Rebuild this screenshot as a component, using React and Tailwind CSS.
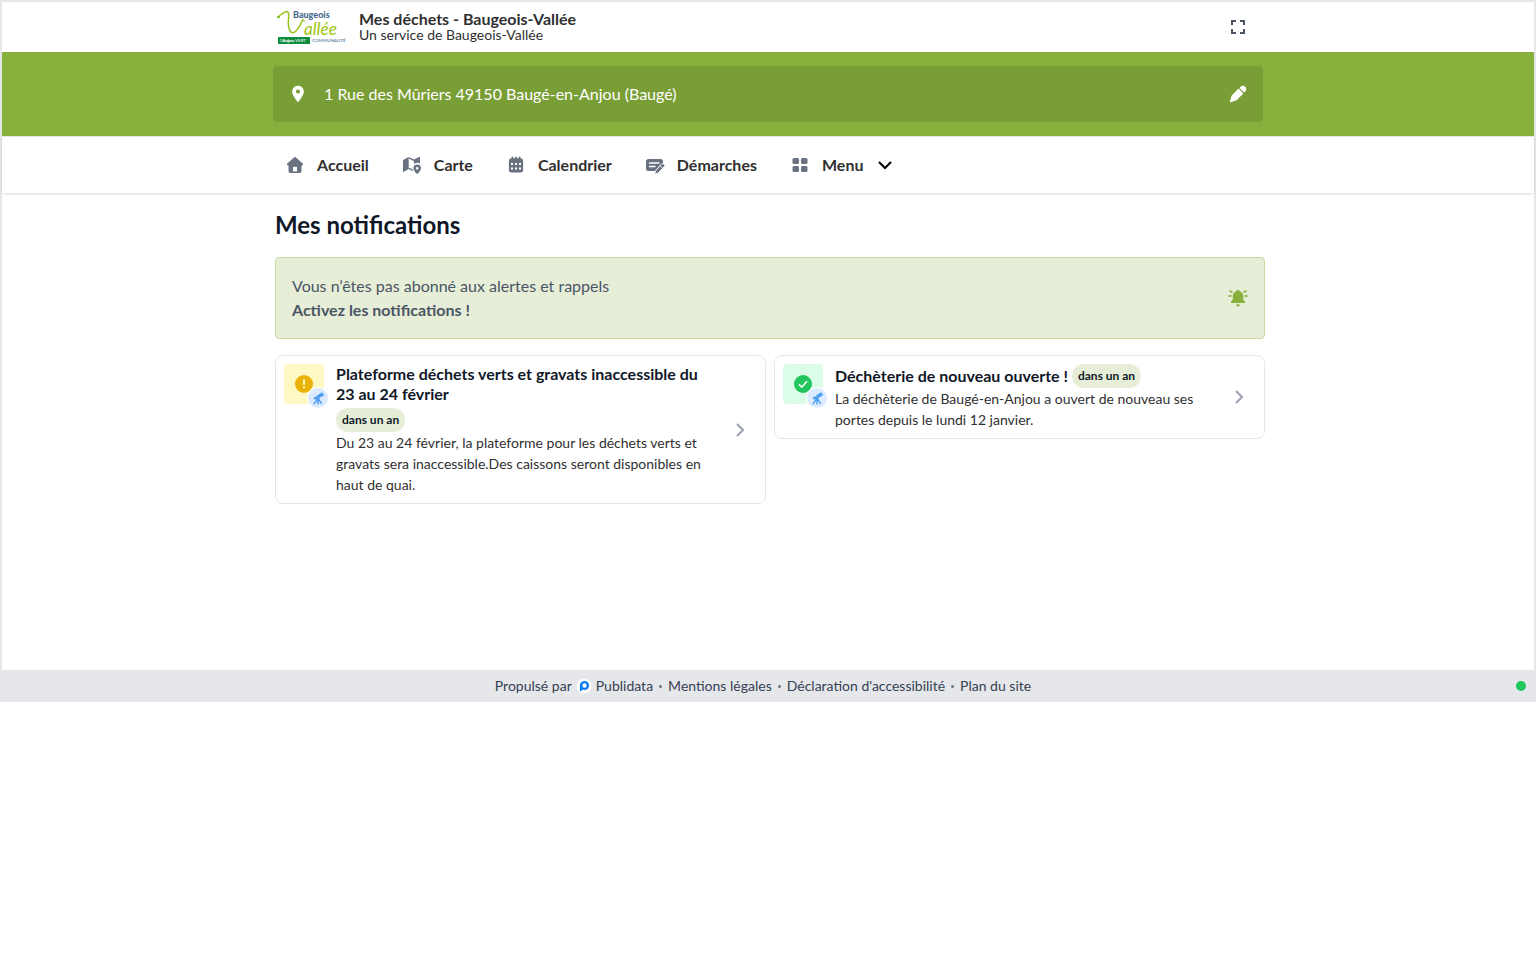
import React from 'react';
import { MdLocationOn, MdFullscreen } from 'react-icons/md';

const LogoIcon = () => (
  <svg viewBox="0 0 70 36" className="w-[70px] h-9 shrink-0" role="img" aria-label="Baugeois Vallée">
    <text x="16" y="9" fontSize="9" fontWeight="900" fontFamily="Lato, sans-serif" fill="#456a8c">Baugeois</text>
    <path
      d="M1 8C5 5 9 1 11 3c2 3-1 9 1 16 1 5 4 6 7 3 4-4 5-7 6-10 .5-2 2-1 2 0"
      fill="none"
      stroke="#9cc41f"
      strokeWidth="1.5"
      strokeLinecap="round"
    />
    <circle cx="1.5" cy="8" r="1.3" fill="#7bb51d" />
    <text x="27" y="26" fontSize="17" fontWeight="500" fontStyle="italic" fontFamily="Lato, sans-serif" fill="#a3c720">allée</text>
    <rect x="1" y="28" width="32" height="7" rx="0.5" fill="#0d8b3e" />
    <text x="3" y="33" fontSize="4.5" fontFamily="Lato, sans-serif" fill="#fff">
      l'<tspan fontWeight="900">Anjou</tspan> VERT
    </text>
    <text x="35" y="33" fontSize="4.5" fontWeight="700" fontFamily="Lato, sans-serif" fill="#6f8fab">COMMUNAUTÉ</text>
  </svg>
);

const PencilIcon = () => (
  <svg viewBox="0 0 20 20" className="size-5" fill="currentColor" aria-hidden="true">
    <path d="M10.6 4.6l4.8 4.8-6.3 6.3c-.4.4-.9.7-1.4.9l-5 1.6c-.5.1-.9-.3-.8-.8l1.5-5.100c.2-.5.4-.9.8-1.300l6.400-6.400z" />
    <path d="M12.700 2.800c1.300-1.300 3.300-1.300 4.600 0s1.300 3.300 0 4.600l-1.100 1.200-4.700-4.700 1.200-1.100z" />
  </svg>
);

const HomeIcon = () => (
  <svg viewBox="0 0 20 20" className="size-5" fill="currentColor" aria-hidden="true">
    <path
      fillRule="evenodd"
      d="M9.300 2.300a1 1 0 0 1 1.400 0l7 6.300c.8.700.300 1.900-.700 1.900h-.500V16a2 2 0 0 1-2 2h-9a2 2 0 0 1-2-2v-5.500H3c-1 0-1.500-1.200-.7-1.900l7-6.300zM8 12.200V16c0 .300.200.500.500.500h3c.300 0 .500-.200.500-.500v-3.800a.5.500 0 0 0-.500-.500h-3a.5.500 0 0 0-.500.500z"
    />
  </svg>
);

const MapIcon = () => (
  <svg viewBox="0 0 20 20" className="size-5" fill="currentColor" aria-hidden="true">
    <path d="M1 5L6.700 2v12L2 16.800c-.4.300-1 0-1-.500V5z" />
    <path d="M6.700 2l5.300 2.600v1.600L6.700 3.600zM6.700 12.600l4.300 2v1.500l-4.300-2.200z" />
    <path d="M12 4.600l5-2.500c.500-.200 1 0 1 .500V8.600a5 5 0 0 0-6 .500V4.600z" />
    <path
      fillRule="evenodd"
      d="M15.200 9.500a3.800 3.800 0 0 1 3.800 3.700c0 2.200-2.200 4.300-3.200 5.400-.3.400-.9.400-1.200 0-1-1.100-3.200-3.200-3.200-5.400a3.800 3.800 0 0 1 3.800-3.700zm0 2.400a1.300 1.300 0 1 0 0 2.600 1.300 1.300 0 0 0 0-2.600z"
    />
  </svg>
);

const CalendarIcon = () => (
  <svg viewBox="0 0 20 20" className="size-5" aria-hidden="true">
    <path
      d="M5.500 3.200V2.500a.9.900 0 0 1 1.800 0v.700h1.800V2.500a.9.900 0 0 1 1.800 0v.700h1.800V2.500a.9.900 0 0 1 1.800 0v.700a2.500 2.500 0 0 1 2.600 2.500V15a2.500 2.500 0 0 1-2.500 2.500H5.400A2.500 2.500 0 0 1 2.900 15V5.700a2.500 2.500 0 0 1 2.600-2.500z"
      fill="currentColor"
    />
    <path d="M5 8h2v2H5zM9 8h2v2H9zM13 8h2v2h-2zM5 12.500h2v2H5zM9 12.500h2v2H9zM13 12.500h2v2h-2z" fill="#fff" />
  </svg>
);

const FormIcon = () => (
  <svg viewBox="0 0 20 20" className="size-5" aria-hidden="true">
    <path d="M3.500 4h12A2.500 2.500 0 0 1 18 6.500v3L10.500 16h-7A2.500 2.500 0 0 1 1 13.500v-7A2.500 2.500 0 0 1 3.500 4z" fill="currentColor" />
    <path d="M4.500 8h9.500M4.500 11.500h5.500" stroke="#fff" strokeWidth="1.4" strokeLinecap="round" />
    <path
      d="M16.500 9.200a1.800 1.800 0 0 1 2.700 2.600l-5.700 5.900c-.3.300-.6.500-1 .600l-1.900.600c-.5.100-.9-.300-.7-.800l.5-1.900c.1-.4.300-.7.600-1l5.500-6z"
      fill="currentColor"
      stroke="#fff"
      strokeWidth="1"
    />
    <path d="M15 10.700l2.600 2.600" stroke="#fff" strokeWidth="0.8" />
  </svg>
);

const GridIcon = () => (
  <svg viewBox="0 0 20 20" className="size-5" fill="currentColor" aria-hidden="true">
    <rect x="2.5" y="3" width="6.5" height="6" rx="1.5" />
    <rect x="11" y="3" width="6.5" height="6" rx="1.5" />
    <rect x="2.5" y="11" width="6.5" height="6" rx="1.5" />
    <rect x="11" y="11" width="6.5" height="6" rx="1.5" />
  </svg>
);

const BellIcon = () => (
  <svg viewBox="0 0 24 24" className="size-6" aria-hidden="true">
    <path
      d="M12 4c.8 0 1.500.5 1.600 1.200 2.300.6 3.600 2.500 3.600 4.900v3.200c0 .700 1.800 2 1.800 2.700v1H5v-1c0-.7 1.800-2 1.800-2.700v-3.200c0-2.400 1.300-4.300 3.600-4.900C10.500 4.500 11.200 4 12 4z"
      fill="currentColor"
    />
    <path d="M10 18.400h4a2 2 0 0 1-4 0z" fill="currentColor" />
    <path d="M4 5l2 1M2.800 10h2.400M20 5l-2 1M21.200 10h-2.400" stroke="currentColor" strokeWidth="1.5" strokeLinecap="round" />
  </svg>
);

const ChevronIcon = ({ className }) => (
  <svg viewBox="0 0 20 20" className={className} fill="none" stroke="currentColor" strokeWidth="2" aria-hidden="true">
    <path d="M7 4l6 6-6 6" />
  </svg>
);

const TelescopeIcon = () => (
  <svg viewBox="0 0 16 16" className="size-4" aria-hidden="true">
    <path d="M7 5.500l5.200-3.300 1.900 3.100-5.400 3z" fill="#4a9df0" />
    <path d="M3.500 7.800l3.700-1.900 1.200 2.200-3.700 1.600z" fill="#4a9df0" />
    <path d="M8 8.500l-4 5.300M8 8.500V14M8 8.500l3.500 4.800" stroke="#4a9df0" strokeWidth="1.4" strokeLinecap="round" />
    <circle cx="8" cy="8.8" r="1.6" fill="#4a9df0" />
  </svg>
);

const WarningIcon = () => (
  <svg viewBox="0 0 20 20" className="size-5" aria-hidden="true">
    <circle cx="10" cy="10" r="9" fill="#eab308" />
    <path d="M10 5.600v5.200M10 12.300v2" stroke="#fef9c3" strokeWidth="2" />
  </svg>
);

const CheckIcon = () => (
  <svg viewBox="0 0 20 20" className="size-5" aria-hidden="true">
    <circle cx="10" cy="10" r="9" fill="#22c55e" />
    <path d="M6 10.400l2.800 2.800 5.200-6" fill="none" stroke="#fff" strokeWidth="1.6" />
  </svg>
);

const PublidataIcon = () => (
  <svg viewBox="0 0 16 16" className="size-4" aria-hidden="true">
    <circle cx="8" cy="8" r="7.5" fill="#fff" />
    <circle cx="8.5" cy="7.5" r="3.4" fill="none" stroke="#0b7bf5" strokeWidth="2.4" />
    <path d="M3.900 7.500h2.400v4.500l-2.400 1.500z" fill="#0b7bf5" />
  </svg>
);

const navItems = [
  { label: 'Accueil', icon: HomeIcon },
  { label: 'Carte', icon: MapIcon },
  { label: 'Calendrier', icon: CalendarIcon },
  { label: 'Démarches', icon: FormIcon },
];

const notifications = [
  {
    title: 'Plateforme déchets verts et gravats inaccessible du 23 au 24 février',
    date: 'dans un an',
    text: 'Du 23 au 24 février, la plateforme pour les déchets verts et gravats sera inaccessible.Des caissons seront disponibles en haut de quai.',
    icon: WarningIcon,
    tile: 'bg-yellow-100',
  },
  {
    title: 'Déchèterie de nouveau ouverte !',
    date: 'dans un an',
    text: 'La déchèterie de Baugé-en-Anjou a ouvert de nouveau ses portes depuis le lundi 12 janvier.',
    icon: CheckIcon,
    tile: 'bg-green-100',
  },
];

const footerLinks = ['Mentions légales', "Déclaration d'accessibilité", 'Plan du site'];

const NotificationCard = ({ item }) => {
  const Icon = item.icon;
  return (
    <a href="#notification" className="flex items-center rounded-lg border border-gray-200 bg-white py-2 pl-2">
      <div className="relative self-start shrink-0 mr-3">
        <div className={`flex size-10 items-center justify-center rounded-sm ${item.tile}`}>
          <Icon />
        </div>
        <div className="absolute -right-1 -bottom-1 flex size-5 items-center justify-center rounded-full bg-blue-100 ring-1 ring-white">
          <TelescopeIcon />
        </div>
      </div>
      <div className="min-w-0 flex-1">
        <div className="flex flex-wrap items-center gap-x-1 gap-y-1">
          <h2 className="text-base leading-5 font-bold text-gray-900">{item.title}</h2>
          <span className="rounded-full bg-[#e7eed8] px-[6px] text-xs leading-6 font-bold text-gray-900">{item.date}</span>
        </div>
        <p className="text-sm leading-[21px] text-[#303030]">{item.text}</p>
      </div>
      <div className="flex w-[50px] shrink-0 justify-center text-gray-400">
        <ChevronIcon className="size-5" />
      </div>
    </a>
  );
};

const App = () => {
  return (
    <div className="bg-white font-['Lato',sans-serif] text-[#303030]">
      <div className="border-2 border-b-0 border-gray-200">
        <header className="mx-auto flex h-[50px] max-w-[990px] items-center justify-between">
          <a href="#accueil" className="flex items-center gap-3 pl-1">
            <LogoIcon />
            <div>
              <p className="text-base leading-4 font-bold">Mes déchets - Baugeois-Vallée</p>
              <p className="text-sm leading-4">Un service de Baugeois-Vallée</p>
            </div>
          </a>
          <button type="button" aria-label="Plein écran" className="mr-[13px] text-gray-600">
            <MdFullscreen className="size-6" />
          </button>
        </header>

        <div className="bg-[#88b03d] py-[14px]">
          <div className="mx-auto flex h-14 max-w-[990px] items-center rounded bg-[#7a9e36] px-[15px] text-white">
            <MdLocationOn className="size-5" />
            <p className="ml-4 flex-1 text-base">1 Rue des Mûriers 49150 Baugé-en-Anjou (Baugé)</p>
            <button type="button" aria-label="Modifier l'adresse">
              <PencilIcon />
            </button>
          </div>
        </div>

        <nav className="border-t border-gray-200 shadow-sm">
          <ul className="mx-auto flex h-14 max-w-[990px] items-center gap-[33px] pl-3 text-base font-bold">
            {navItems.map(({ label, icon: Icon }) => (
              <li key={label}>
                <a href="#nav" className="flex items-center gap-3">
                  <span className="text-gray-500"><Icon /></span>
                  {label}
                </a>
              </li>
            ))}
            <li>
              <button type="button" className="flex items-center gap-3">
                <span className="text-gray-500"><GridIcon /></span>
                Menu
                <ChevronIcon className="size-5 rotate-90 text-black" />
              </button>
            </li>
          </ul>
        </nav>

        <main className="mx-auto max-w-[994px] pt-4 pb-[166px] pl-1">
          <h1 className="text-2xl font-bold text-gray-900">Mes notifications</h1>
          <a
            href="#activer"
            className="mt-4 flex items-center justify-between rounded border border-[#c8da9f] bg-[#e7eed8] py-4 pr-[14px] pl-4 text-gray-600"
          >
            <div className="text-base leading-6">
              <p>Vous n’êtes pas abonné aux alertes et rappels</p>
              <p className="font-bold">Activez les notifications !</p>
            </div>
            <span className="text-[#88b03d]"><BellIcon /></span>
          </a>
          <div className="mt-4 grid grid-cols-1 items-start gap-2 md:grid-cols-2">
            {notifications.map((item) => (
              <NotificationCard key={item.title} item={item} />
            ))}
          </div>
        </main>
      </div>

      <footer className="flex h-8 items-center bg-gray-200 px-[10px] text-sm text-gray-700">
        <div className="flex flex-1 items-center justify-center gap-[6px]">
          <a href="#publidata" className="flex items-center gap-1">
            Propulsé par <PublidataIcon /> Publidata
          </a>
          {footerLinks.map((link) => (
            <React.Fragment key={link}>
              <span className="size-[3px] rounded-full bg-gray-500" />
              <a href="#footer">{link}</a>
            </React.Fragment>
          ))}
        </div>
        <span className="size-[10px] rounded-full bg-[#22c55e]" />
      </footer>
    </div>
  );
};

export default App;
